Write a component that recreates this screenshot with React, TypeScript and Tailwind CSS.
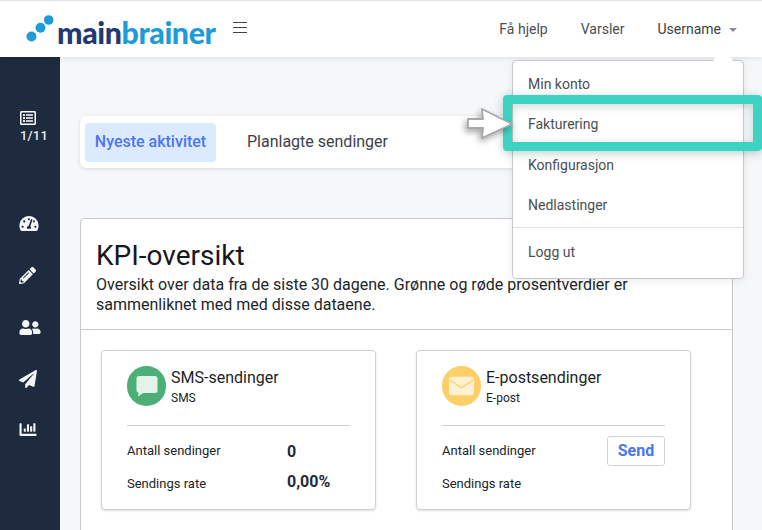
import React from "react";
import { FaRegListAlt, FaTachometerAlt, FaPencilAlt, FaUserFriends, FaPaperPlane, FaChartBar } from "react-icons/fa";

const Logo = () => (
  <div className="flex items-center">
    <svg viewBox="0 0 28 28" className="w-[28px] h-[28px] mt-[1px]">
      <circle cx="5.500" cy="21.500" r="5" fill="#1e9bd9" />
      <circle cx="14.500" cy="12.700" r="5" fill="#1e9bd9" />
      <circle cx="22.700" cy="5" r="4.800" fill="#1e9bd9" />
    </svg>
    <span className="ml-[3px] text-[30.300px] leading-none font-black tracking-[-0.4px] font-['Lato',sans-serif] mt-[7px]">
      <span className="text-[#1f3a72]">main</span>
      <span className="text-[#1e9bd9]">brainer</span>
    </span>
  </div>
);

const StatRow = ({ label, value, cls, valueCls = "" }: { label: string; value?: string; cls: string; valueCls?: string }) => (
  <div className={`flex items-center h-[20px] text-[13px] text-[#212529] ${cls}`}>
    <span className="w-[160px]">{label}</span>
    {value && <span className={`text-[16px] font-bold text-[#1f2a3d] ${valueCls}`}>{value}</span>}
  </div>
);

export default function App() {
  return (
    <div className="relative w-[762px] h-[530px] overflow-hidden bg-[#f5f7f9] font-['Roboto',sans-serif]">
      <header className="h-[57px] bg-white border-t border-[#e2e2e2] flex items-center pl-[26px] pr-[25px] shadow-[0_1px_6px_rgba(0,0,0,0.1)] relative z-10">
        <Logo />
        <svg viewBox="0 0 14 12" className="w-[14px] h-[12px] ml-[17px] mb-[2px] text-[#444]" fill="none" stroke="currentColor" strokeWidth="1">
          <path d="M0 .5h14M0 5.500h14M0 10.500h14" />
        </svg>
        <nav className="ml-auto flex items-center text-[14px] text-[#4a4f55]">
          <span className="mr-[33px]">Få hjelp</span>
          <span className="mr-[33px]">Varsler</span>
          <span className="text-[#3a3f45]">Username</span>
          <span className="ml-[8px] mt-[1px] border-x-[4px] border-t-[4px] border-x-transparent border-t-[#8a8f95]" />
        </nav>
      </header>

      <div className="flex h-[473px]">
        <aside className="w-[60px] shrink-0 bg-[#1e2a3e] text-white flex flex-col items-start pl-[19px] pt-[53px]">
          <FaRegListAlt className="w-[18px] h-[16px]" />
          <span className="ml-[1px] text-[13px] font-medium leading-none mt-[3px] tracking-[0.2px] text-[#e8eaed]">1/11</span>
          <div className="mt-[73px] flex flex-col gap-[35px] items-start text-[#f4f5f6]">
            <FaTachometerAlt className="w-[20px] h-[17px]" />
            <FaPencilAlt className="w-[17px] h-[17px]" />
            <FaUserFriends className="w-[22px] h-[17px]" />
            <FaPaperPlane className="w-[18px] h-[18px] mt-[-1px]" />
            <FaChartBar className="w-[18px] h-[17px] mt-[-2px]" />
          </div>
        </aside>

        <main className="w-[653px] ml-[20px] pt-[59px]">
          <div className="h-[52px] bg-white rounded-[6px] shadow-[0_1px_4px_rgba(0,0,0,0.12)] flex items-center px-[5px]">
            <span className="h-[39px] w-[131px] rounded-[4px] bg-[#dbeafe] text-[#4a76f0] text-[16px] font-medium flex items-center justify-center">
              Nyeste aktivitet
            </span>
            <span className="ml-[31px] text-[16px] text-[#3c4148]">Planlagte sendinger</span>
          </div>

          <section className="mt-[50px] h-[320px] bg-white border border-[#c4c8cf] rounded-t-[4px]">
            <div className="h-[111px] border-b border-[#c9cdd3] px-[15px] pt-[20px] text-[#15181d]">
              <h1 className="text-[28px] leading-[33px]">KPI-oversikt</h1>
              <p className="text-[16px] leading-[20px] mt-[3px] text-[#212529] w-[580px]">
                Oversikt over data fra de siste 30 dagene. Grønne og røde prosentverdier er sammenliknet med med disse dataene.
              </p>
            </div>
            <div className="flex gap-[40px] pl-[20px] pt-[20px]">
              <Card title="SMS-sendinger" sub="SMS" color="#4caf78" kind="sms">
                <StatRow label="Antall sendinger" value="0" cls="mt-[15px]" valueCls="mt-[2px]" />
                <StatRow label="Sendings rate" value="0,00%" cls="mt-[13px]" valueCls="mt-[-4px]" />
              </Card>
              <Card title="E-postsendinger" sub="E-post" color="#fdcf68" kind="mail">
                <div className="flex items-center justify-between h-[30px] mt-[10px] text-[13px] text-[#212529]">
                  <span>Antall sendinger</span>
                  <span className="w-[58px] h-[30px] rounded-[3px] border border-[#cfd3d9] text-[#4a76f0] font-bold text-[16px] flex items-center justify-center">Send</span>
                </div>
                <StatRow label="Sendings rate" cls="mt-[8px]" />
              </Card>
            </div>
          </section>
        </main>
      </div>

      <div className="absolute left-[512px] top-[60px] w-[232px] h-[219px] bg-white border border-[#c5c8cc] rounded-[4px] shadow-[0_2px_8px_rgba(0,0,0,0.08)] z-20 text-[14px] text-[#494e54] pt-[3px]">
        <span className="absolute right-[13px] top-[-8px] w-[14px] h-[14px] bg-white rotate-45" />
        <div className="relative h-[40px] flex items-center pl-[15px]">Min konto</div>
        <div className="h-[41px] flex items-center pl-[15px]">Fakturering</div>
        <div className="h-[40px] flex items-center pl-[15px]">Konfigurasjon</div>
        <div className="h-[40px] flex items-center pl-[15px]">Nedlastinger</div>
        <div className="border-t border-[#e3e5e8] mt-[2px] h-[49px] flex items-center pl-[15px]">Logg ut</div>
      </div>

      <div className="absolute left-[503px] top-[95px] w-[259px] h-[56px] border-[9px] border-[#3dd3c3] rounded-[4px] z-30 shadow-[0_2px_10px_rgba(40,90,80,0.3),inset_0_2px_8px_rgba(40,90,80,0.25)]" />

      <svg viewBox="0 0 48 34" className="absolute left-[465px] top-[107px] w-[48px] h-[34px] z-40" style={{ filter: "drop-shadow(-2px 3px 3px rgba(0,0,0,0.35))" }}>
        <path d="M3 12h15l-1-10 30 15-30 14 1-10H3z" fill="#fff" stroke="#a8a8a8" strokeWidth="1.800" strokeLinejoin="round" />
      </svg>
    </div>
  );
}

function Card({ title, sub, color, kind, children }: { title: string; sub: string; color: string; kind: "sms" | "mail"; children: React.ReactNode }) {
  return (
    <div className="w-[275px] h-[160px] shrink-0 bg-white border border-[#cdd0d6] rounded-[4px] shadow-[0_1px_2px_rgba(0,0,0,0.15)] px-[25px] pt-[15px]">
      <div className="flex h-[60px] border-b border-[#cdd0d6]">
        <span className="w-[39px] h-[40px] rounded-full flex items-center justify-center shrink-0" style={{ backgroundColor: color }}>
          {kind === "sms" ? (
            <svg viewBox="0 0 26 26" className="w-[26px] h-[26px]">
              <path d="M5 3h16a2.500 2.500 0 0 1 2.500 2.500v12a2.500 2.500 0 0 1-2.500 2.500H9l-5 3.500 .6-3.700A2.500 2.500 0 0 1 2.500 17.500v-12A2.500 2.500 0 0 1 5 3z" fill="#e4f3ea" />
            </svg>
          ) : (
            <svg viewBox="0 0 32 24" className="w-[33px] h-[20px]">
              <rect x="1" y="1" width="30" height="22" rx="3" fill="#fff1d2" />
              <path d="M2 5l14 9 14-9" fill="none" stroke="#fdcf68" strokeWidth="1.500" />
            </svg>
          )}
        </span>
        <div className="ml-[5px] text-[#1b1f25]">
          <div className="text-[16px] leading-[19px] mt-[2px]">{title}</div>
          <div className="text-[12px] leading-[14px] mt-[4px]">{sub}</div>
        </div>
      </div>
      {children}
    </div>
  );
}
